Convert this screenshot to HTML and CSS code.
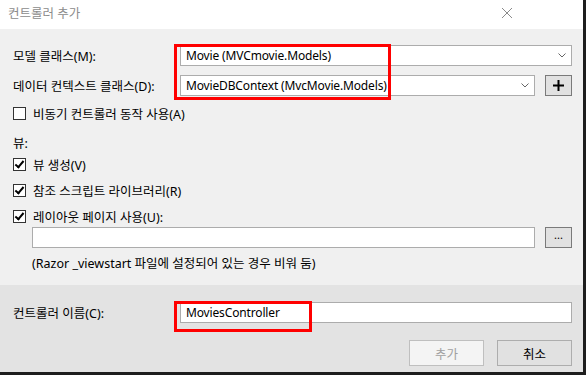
FILE: index.html
```html
<!DOCTYPE html>
<html lang="ko">
<head>
  <meta charset="UTF-8" />
  <title>컨트롤러 추가</title>
  <link rel="stylesheet" href="styles.css">
</head>
<body>
  <div class="window">
    <header class="titlebar">
      <span class="title">컨트롤러 추가</span>
      <svg class="close" width="12" height="12" viewBox="0 0 12 12">
        <path d="M1 1 L11 11 M11 1 L1 11" stroke="#8a8a8a" stroke-width="1" fill="none" />
      </svg>
    </header>

    <main class="content">
      <div class="row combo-row">
        <label class="field-label">모델 클래스(M):</label>
        <div class="combo wide">
          <span>Movie (MVCmovie.Models)</span>
          <svg class="chev" width="8" height="5" viewBox="0 0 8 5"><path d="M0.5 0.5 L4 4 L7.5 0.5" stroke="#666" fill="none" /></svg>
        </div>
      </div>
      <div class="row combo-row second">
        <label class="field-label">데이터 컨텍스트 클래스(D):</label>
        <div class="combo">
          <span>MovieDBContext (MvcMovie.Models)</span>
          <svg class="chev" width="8" height="5" viewBox="0 0 8 5"><path d="M0.5 0.5 L4 4 L7.5 0.5" stroke="#666" fill="none" /></svg>
        </div>
        <button class="small-btn plus">
          <svg width="13" height="13" viewBox="0 0 13 13"><path d="M6.5 1 V12 M1 6.5 H12" stroke="#000" stroke-width="2" /></svg>
        </button>
      </div>
      <div class="row check-row async">
        <span class="check"></span>
        <span>비동기 컨트롤러 동작 사용(A)</span>
      </div>
      <div class="row text-row views">뷰:</div>
      <div class="row check-row first-check">
        <span class="check on"></span>
        <span>뷰 생성(V)</span>
      </div>
      <div class="row check-row">
        <span class="check on"></span>
        <span>참조 스크립트 라이브러리(R)</span>
      </div>
      <div class="row check-row">
        <span class="check on"></span>
        <span>레이아웃 페이지 사용(U):</span>
      </div>
      <div class="row layout-row">
        <div class="textbox"></div>
        <button class="small-btn dots">...</button>
      </div>
      <div class="row text-row note">(Razor _viewstart 파일에 설정되어 있는 경우 비워 둠)</div>
    </main>

    <footer class="bottom">
      <div class="row name-row">
        <label class="field-label">컨트롤러 이름(C):</label>
        <div class="textbox name">MoviesController</div>
      </div>
      <div class="actions">
        <button class="btn disabled">추가</button>
        <button class="btn">취소</button>
      </div>
    </footer>

    <div class="mark mark-classes"></div>
    <div class="mark mark-name"></div>
  </div>
</body>
</html>
```

FILE: styles.css
```css
body {
  margin: 0;
  background-color: #1e1e1e;
  font-family: "Noto Sans", "Noto Sans CJK KR", sans-serif;
  font-size: 12.5px;
  color: #000;
  width: 586px;
  height: 375px;
  overflow: hidden;
}
.window {
  position: relative;
  width: 583px;
  height: 372px;
  display: flex;
  flex-direction: column;
}
.titlebar {
  height: 29px;
  background-color: #fff;
  display: flex;
  align-items: center;
  justify-content: space-between;
  padding: 0 70px 4px 8px;
  box-sizing: border-box;
}
.title {
  color: #8c8c8c;
}
.content {
  height: 256px;
  background-color: #f0f0f0;
  padding: 16px 11px 0 13px;
  box-sizing: border-box;
}
.row {
  display: flex;
  align-items: center;
}
.combo-row {
  height: 21px;
}
.combo-row.second {
  margin-top: 9px;
}
.field-label {
  width: 167px;
  flex: none;
}
.combo,
.textbox {
  height: 21px;
  box-sizing: border-box;
  background-color: #fff;
  border: 1px solid #acacac;
  display: flex;
  align-items: center;
  padding: 0 5px;
  white-space: nowrap;
  font-size: 12px;
  letter-spacing: -0.15px;
}
.combo {
  width: 355px;
  justify-content: space-between;
}
.combo.wide {
  width: 392px;
}
.small-btn {
  width: 27px;
  height: 21px;
  margin-left: 10px;
  padding: 0;
  background-color: #e1e1e1;
  border: 1px solid #7a7a7a;
  display: flex;
  align-items: center;
  justify-content: center;
  font-family: inherit;
  font-size: 11px;
}
.check-row {
  height: 19px;
  margin-top: 7px;
  gap: 7px;
}
.check-row.async {
  margin-top: 8px;
}
.check-row.first-check {
  margin-top: 3px;
}
.check {
  width: 13px;
  height: 13px;
  box-sizing: border-box;
  border: 1px solid #333;
  background-color: #fff;
  position: relative;
}
.check.on::after {
  content: "";
  position: absolute;
  left: 3px;
  top: 0px;
  width: 3px;
  height: 7px;
  border-right: 2px solid #000;
  border-bottom: 2px solid #000;
  transform: rotate(40deg);
}
.text-row {
  height: 19px;
}
.views {
  margin-top: 10px;
}
.layout-row {
  margin-top: 1px;
  padding-left: 19px;
}
.layout-row .textbox {
  width: 503px;
}
.dots {
  padding-bottom: 6px;
}
.note {
  margin-top: 5px;
  padding-left: 19px;
}
.bottom {
  flex: 1;
  background-color: #e3e3e3;
  padding: 17px 11px 0 13px;
  box-sizing: border-box;
}
.textbox.name {
  width: 392px;
}
.actions {
  display: flex;
  justify-content: flex-end;
  gap: 13px;
  margin-top: 17px;
}
.btn {
  width: 75px;
  height: 26px;
  background-color: #e1e1e1;
  border: 1px solid #adadad;
  font-family: inherit;
  font-size: 12.5px;
  color: #000;
  padding: 0;
}
.btn.disabled {
  background-color: #f4f4f4;
  border-color: #bfbfbf;
  color: #a0a0a0;
}
.mark {
  position: absolute;
  border: 3px solid #f00;
  box-sizing: border-box;
}
.mark-classes {
  left: 174px;
  top: 44px;
  width: 217px;
  height: 56px;
}
.mark-name {
  left: 174px;
  top: 301px;
  width: 138px;
  height: 31px;
}
```
